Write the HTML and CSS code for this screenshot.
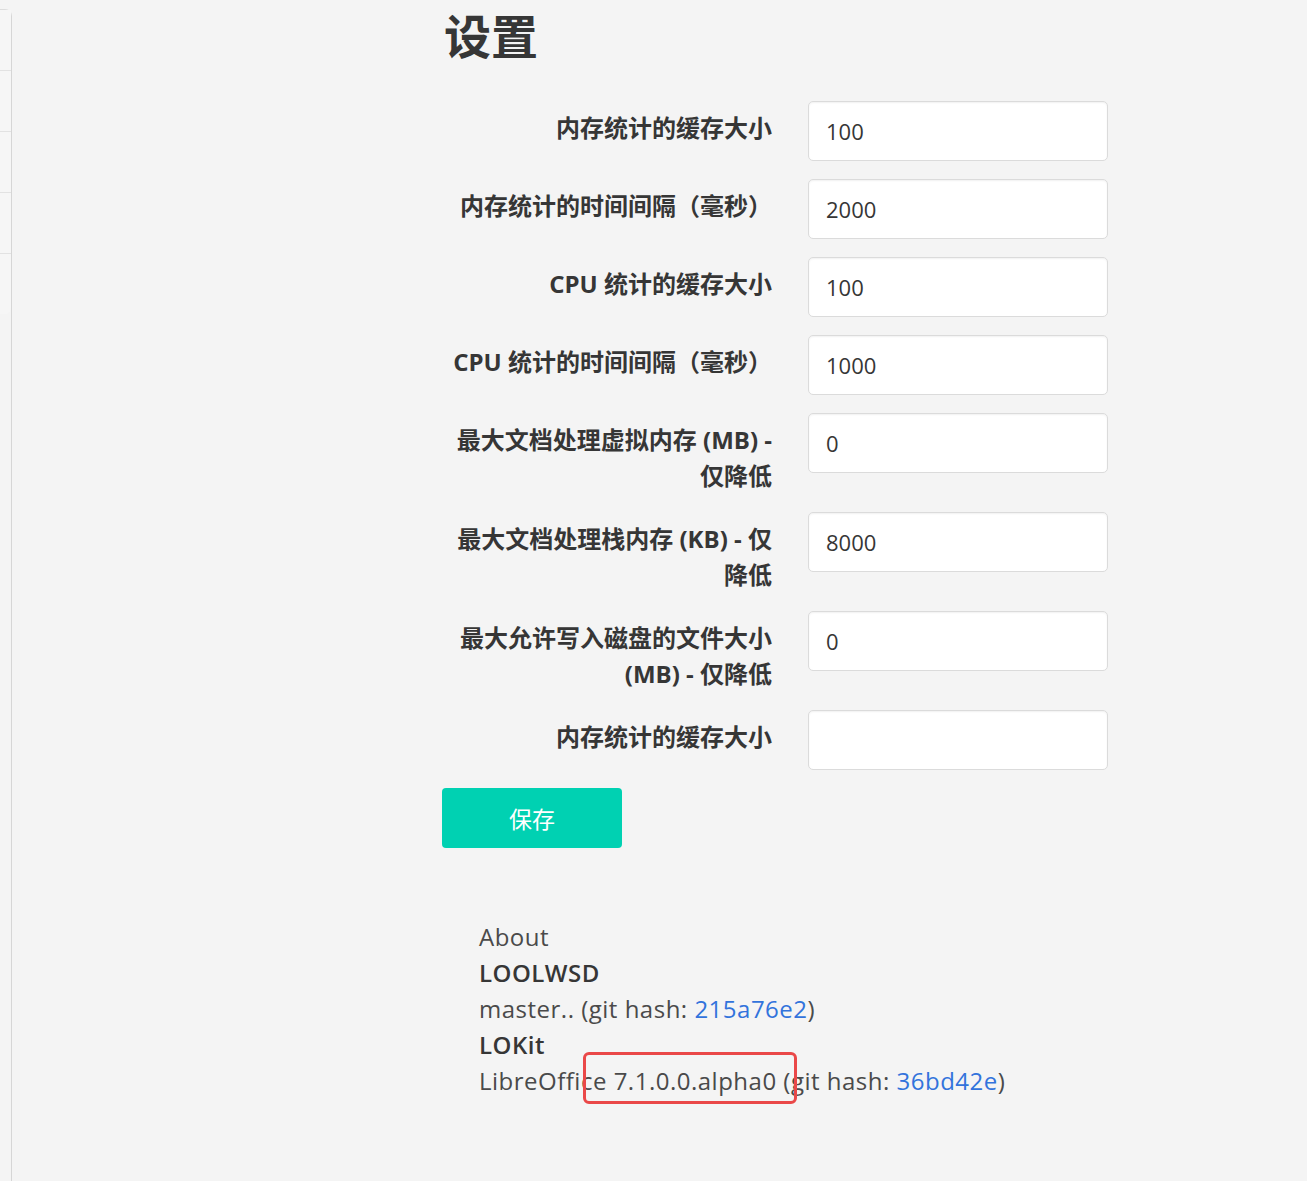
FILE: index.html
```html
<!DOCTYPE html>
<html lang="zh-CN">
<head>
<meta charset="utf-8">
<title>设置</title>
<link rel="stylesheet" href="styles.css">
</head>
<body>
<div class="layout">
  <aside class="sidebar">
    <ul class="menu">
      <li></li>
      <li></li>
      <li></li>
      <li></li>
      <li></li>
    </ul>
  </aside>
  <main class="main">
    <div class="container">
      <h1 class="title">设置</h1>
      <form class="settings">
        <div class="field">
          <label class="label">内存统计的缓存大小</label>
          <input class="input" type="text" value="100">
        </div>
        <div class="field">
          <label class="label">内存统计的时间间隔（毫秒）</label>
          <input class="input" type="text" value="2000">
        </div>
        <div class="field">
          <label class="label">CPU 统计的缓存大小</label>
          <input class="input" type="text" value="100">
        </div>
        <div class="field">
          <label class="label">CPU 统计的时间间隔（毫秒）</label>
          <input class="input" type="text" value="1000">
        </div>
        <div class="field">
          <label class="label">最大文档处理虚拟内存 (MB) - 仅降低</label>
          <input class="input" type="text" value="0">
        </div>
        <div class="field">
          <label class="label">最大文档处理栈内存 (KB) - 仅降低</label>
          <input class="input" type="text" value="8000">
        </div>
        <div class="field">
          <label class="label">最大允许写入磁盘的文件大小 (MB) - 仅降低</label>
          <input class="input" type="text" value="0">
        </div>
        <div class="field">
          <label class="label">内存统计的缓存大小</label>
          <input class="input" type="text" value="">
        </div>
        <button class="button" type="button">保存</button>
      </form>
      <div class="about">
        <p>About</p>
        <p class="strong">LOOLWSD</p>
        <p>master.. (git hash: <a href="#">215a76e2</a>)</p>
        <p class="strong">LOKit</p>
        <p class="lokit">LibreOffice 7.1.0.0.alpha0 (git hash: <a href="#">36bd42e</a>)<span class="mark"></span></p>
      </div>
    </div>
  </main>
</div>
</body>
</html>
```

FILE: styles.css
```css
html, body {
  margin: 0;
  padding: 0;
  background: #f4f4f4;
  height: 100%;
}
body {
  font-family: "Open Sans", "Noto Sans CJK SC", sans-serif;
  color: #363636;
}
.layout {
  display: flex;
  min-height: 1181px;
}
.sidebar {
  width: 11px;
  flex: none;
  margin-top: 9px;
  border-top: 1px solid #dcdcdc;
  border-right: 1px solid #d6d6d6;
  border-top-right-radius: 7px;
}
.menu {
  list-style: none;
  margin: 0;
  padding: 0;
  background: #f6f6f6;
  border-bottom-right-radius: 6px;
}
.menu li {
  height: 60px;
  border-bottom: 1px solid #e2e2e2;
}
.menu li:last-child {
  border-bottom: none;
}
.main {
  flex: 1;
}
.container {
  width: 665px;
  margin-left: 430px;
}
.title {
  margin: 0;
  padding-top: 5px;
  font-family: "Noto Sans CJK SC", sans-serif;
  font-size: 47px;
  line-height: 58px;
  font-weight: 700;
  color: #363636;
  padding-left: 2px;
}
.settings {
  margin-top: 38px;
  display: flex;
  flex-direction: column;
  gap: 18px;
}
.field {
  display: flex;
  align-items: flex-start;
  gap: 36px;
}
.label {
  width: 330px;
  flex: none;
  text-align: right;
  padding-top: 9px;
  font-family: "Open Sans", "Noto Sans CJK SC", sans-serif;
  font-size: 24px;
  line-height: 36px;
  font-weight: 700;
  color: #363636;
}
.input {
  box-sizing: border-box;
  width: 300px;
  height: 60px;
  flex: none;
  margin: 0;
  padding: 0 17px;
  border: 1px solid #dbdbdb;
  border-radius: 5px;
  background: #fff;
  box-shadow: inset 0 1px 2px rgba(10, 10, 10, 0.06);
  font-family: "Open Sans", sans-serif;
  font-size: 22px;
  color: #363636;
  outline: none;
}
.button {
  width: 180px;
  height: 60px;
  margin: 0;
  border: none;
  border-radius: 4px;
  background: #00d1b2;
  color: #fff;
  font-family: "Noto Sans CJK SC", sans-serif;
  font-size: 23px;
  cursor: pointer;
}
.about {
  margin-top: 71px;
  padding-left: 37px;
  font-family: "Open Sans", sans-serif;
  font-size: 24px;
  letter-spacing: 0.5px;
  line-height: 36px;
  color: #4a4a4a;
}
.about p {
  margin: 0;
}
.about .strong {
  font-weight: 600;
  color: #363636;
}
.about a {
  color: #3273dc;
  text-decoration: none;
}
.lokit {
  position: relative;
}
.mark {
  position: absolute;
  left: 104px;
  top: -11px;
  box-sizing: border-box;
  width: 214px;
  height: 52px;
  border: 3px solid #ea4848;
  border-radius: 6px;
}
```
